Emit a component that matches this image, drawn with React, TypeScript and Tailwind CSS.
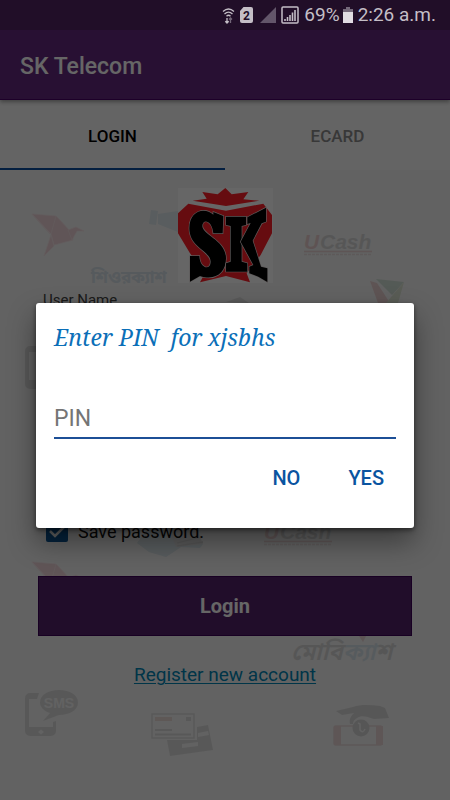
import React from 'react';

function StatusBar() {
  return (
    <div className="relative z-20 flex h-[30px] items-center justify-end bg-[#210e28] pr-[14px] text-[#c4bec6]">
      <svg width="15" height="20" viewBox="0 0 15 20" className="mr-1" fill="none" stroke="currentColor" strokeWidth="1.3">
        <path d="M2 6.500Q7.500 1.500 13 6.500M3.500 9Q7.500 5.200 11.500 9M5.500 11.200Q7.500 9.300 9.500 11.200" />
        <path d="M6 18V13M4.300 16.300 6 18l1.700-1.700" />
        <path d="M9.500 18v-5M8 14.500l1.500-1.500 1.500 1.500" opacity=".5" />
      </svg>
      <svg width="13" height="16" viewBox="0 0 13 16" className="mr-[7px]">
        <path d="M3.500 0H11a2 2 0 0 1 2 2v12a2 2 0 0 1-2 2H2a2 2 0 0 1-2-2V4z" fill="currentColor" />
        <text x="6.500" y="12.500" textAnchor="middle" fontSize="12" fontWeight="700" fontFamily="Roboto" fill="#210e28">2</text>
      </svg>
      <svg width="16" height="16" viewBox="0 0 16 16" className="mr-[5px]">
        <path d="M16 0v16H0z" fill="#63566a" />
      </svg>
      <svg width="18" height="18" viewBox="0 0 18 18" className="mr-[5px]">
        <rect x="1" y="1" width="16" height="16" rx="1" fill="none" stroke="currentColor" strokeWidth="1.500" />
        <path d="M4 15v-2M6.500 15v-4M9 15V9M11.500 15V6.500M14 15V4" stroke="currentColor" strokeWidth="1.600" />
      </svg>
      <span className="text-[19px] leading-6">69%</span>
      <svg width="10" height="16" viewBox="0 0 10 16" className="ml-[3px] mr-[5px]">
        <path d="M3 0h4v2h3v4H0V2h3z" fill="#74697a" />
        <path d="M0 5h10v11H0z" fill="#e0dce2" />
      </svg>
      <span className="text-[19px] leading-6">2:26 a.m.</span>
    </div>
  );
}

function Bird() {
  return (
    <g fill="#f0ccd3" stroke="#f5e2e5" strokeWidth=".7">
      <path d="M0 0 24 2 37 16 20 21z" />
      <path d="M24 2 37 16 41 26 22 31 19 20z" />
      <path d="M0 0 18 20 7 8z" />
      <path d="M36 16 44 13 52 17 45 17 40 26z" />
      <path d="M19 21 22 32 12 42z" />
    </g>
  );
}

function UCash() {
  return (
    <g fontFamily="Liberation Sans, Arial, sans-serif" fontWeight="700" fontStyle="italic">
      <text x="0" y="15" fontSize="21" fill="#ebc8c8">U</text>
      <text x="16" y="15" fontSize="21" fill="#d2d2d2">Cash</text>
      <path d="M0 17.500h68" stroke="#e8cccc" strokeWidth="1.500" />
      <path d="M0 20.500h68" stroke="#e8dada" strokeWidth="1.500" strokeDasharray="3 1" />
    </g>
  );
}

function Hand() {
  return (
    <g>
      <path d="M0 15 11 0 39 4 66 16 63 20 44 19 29 29 12 24z" fill="#d5e2e9" />
      <path d="M31 0 61 3 66 16 39 19z" fill="#dedede" />
      <path d="M40 15 64 9M40 18l26-4" stroke="#cecece" strokeWidth="1.500" />
    </g>
  );
}

function Phone() {
  return (
    <path fillRule="evenodd" d="M5 3h9l-2 6H4v28h24V32l3-1v10a5 5 0 0 1-5 5H5a5 5 0 0 1-5-5V8a5 5 0 0 1 5-5zM16 39.500l-3 2.500 3 2.500 3-2.500z" fill="#d8d8d8" />
  );
}

function SmsPhone() {
  return (
    <g>
      <Phone />
      <path d="M34 0c11 0 19 5 19 12.500S45 25 34 25l-16 6 7-8c-6-2-10-6-10-10.500C15 5 23 0 34 0z" fill="#d8d8d8" />
      <text x="34" y="17.500" textAnchor="middle" fontSize="14" fontWeight="700" fontFamily="Liberation Sans, Arial" fill="#f5f5f5">SMS</text>
    </g>
  );
}

function Watermarks() {
  return (
    <svg className="absolute left-0 top-0 opacity-80" width="450" height="630" viewBox="0 170 450 630" aria-hidden="true">
      <g transform="translate(32 214)"><Bird /></g>
      <g transform="translate(32 562)"><Bird /></g>
      <g transform="translate(304 234)"><UCash /></g>
      <g transform="translate(264 524)"><UCash /></g>
      <path d="M151 210l7 1-2 14-7-1zM158 214l20-3v21l-20-8z" fill="#d9e6ec" />
      <g transform="translate(137 528)"><Hand /></g>
      <text x="91" y="283" fontSize="17" fontWeight="700" fontFamily="Noto Sans Bengali, sans-serif" fill="#cfdce6">শিওরক্যাশ</text>
      <text x="291" y="660" fontSize="24" fontWeight="600" fontStyle="italic" fontFamily="Noto Sans Bengali, sans-serif" fill="#d0d0d0">
        মোবি<tspan fill="#d2e0e8">ক্যা</tspan>শ
      </text>
      <path d="M370 281l7 2 13 20h-12z" fill="#ebcaca" />
      <path d="M376 279l28 3-12 13z" fill="#cbdcd0" />
      <path d="M404 282l-6 21h-12z" fill="#d9e4cc" />
      <path d="M226 302l14-5 9 6z" fill="#dadada" />
      <g transform="translate(25 343)"><Phone /></g>
      <path d="M359 636h7l-3 6z" fill="#e8cccc" />
      <g transform="translate(25 690)"><SmsPhone /></g>
      <g fill="none" stroke="#d8d8d8" strokeWidth="1.500">
        <rect x="152" y="714" width="42" height="24" />
        <path d="M155 730h17M155 734.500h36" strokeWidth="2" />
      </g>
      <path d="M155 717h17v4h-17z" fill="#e8d6d2" />
      <path d="M186 717h5v4h-5z" fill="#d8d8d8" />
      <path fillRule="evenodd" d="M197 727l11-2 5 25-43 6-3-16h30zM182 744l16-2v4l-16 2zM198 733l10-2 1 4-11 2z" fill="#d8d8d8" />
      <rect x="334" y="726" width="48" height="19" rx="2" fill="none" stroke="#e8d2d2" strokeWidth="1.500" />
      <path d="M334 726h7v19h-7zM376 726h7v19h-7z" fill="#e8d2d2" />
      <path d="M336 711l17-4c8-3 18-2 27-1l5 2 4 10-15 1c-8-3-13-4-17-1q-4 2-4 6h-3c-1-5 1-8 4-11l-12 2z" fill="#d4d4d4" />
      <circle cx="361" cy="728" r="8.500" fill="#d0d0d0" />
      <path d="M358 723l2 1v6q3 4 5-1" fill="none" stroke="#f5f5f5" strokeWidth="1.500" />
    </svg>
  );
}

function Logo() {
  return (
    <svg className="relative mx-auto mt-[18px] block" width="95" height="95" viewBox="84 54 285 285" role="img" aria-label="SK">
      <path d="M84 54h285v285H84z" fill="#fff" />
      <g fill="#ff2028">
        <path d="M157 66l46 7 23-19 19 19 50-7-15 22 48 4-100 16-100-16 42-6z" />
        <path d="M115 101l113 21 112-21 26 34v55l-34 65-42 55 10 27-72-19-78 19 15-27-45-60-36-60v-60z" />
      </g>
      <g fill="#000" stroke="#e8e0e0" strokeWidth="4" paintOrder="stroke">
        <path d="M190 134v-8l30 12-2 52h-28C186 148 157 146 157 168c0 27 71 43 71 97 0 45-33 68-78 53l-30 17v-77h28c2 39 34 44 34 17 0-32-64-42-64-100 0-52 45-65 72-41z" />
        <path d="M228 140h60v25l-13 3v107l17 5v25h-64v-25l14-5V168l-14-3z" />
        <path d="M292 162v-20l56-29v42l-13 5-27 52 25 78 19 5v41l-27-16-27-10v-20l12-5-38-70 30-56z" />
      </g>
    </svg>
  );
}

function Dialog() {
  return (
    <div className="absolute inset-0 z-10 flex items-center bg-black/60 px-9 pt-[30px]">
      <form
        role="dialog"
        aria-labelledby="pin-title"
        className="w-full rounded-[3px] bg-white px-[18px] pb-[26px] pt-[18px] shadow-[0_14px_28px_rgba(0,0,0,0.4),0_2px_5px_rgba(0,0,0,0.5)]"
        onSubmit={(e) => e.preventDefault()}
      >
        <h2 id="pin-title" className="whitespace-pre font-['Noto_Serif','Droid_Serif','Liberation_Serif',serif] text-[23px] italic leading-8 text-[#0b6fb8]">
          Enter PIN  for xjsbhs
        </h2>
        <input
          type="password"
          aria-label="PIN"
          placeholder="PIN"
          className="mt-[46px] block h-10 w-full border-b-2 border-[#1c4f96] bg-transparent px-0 pt-[2px] text-[23px] text-black outline-none placeholder:text-[#757575]"
        />
        <div className="mt-[15px] flex justify-end">
          <button type="button" className="h-12 px-3 text-xl font-medium text-[#0a54a0]">NO</button>
          <button type="submit" className="ml-6 h-12 px-3 text-xl font-medium text-[#0a54a0]">YES</button>
        </div>
      </form>
    </div>
  );
}

export default function App() {
  return (
    <div className="relative flex min-h-screen flex-col bg-[#f5f5f5] font-[Roboto,sans-serif]">
      <StatusBar />
      <header className="relative z-[1] flex h-[70px] items-center border-b border-[#4a0066] bg-[#642a80] px-5 pt-1.5 shadow-[0_2px_4px_rgba(0,0,0,0.35)]">
        <h1 className="text-[23px] font-medium text-white">SK Telecom</h1>
      </header>
      <nav className="grid h-[70px] grid-cols-2 bg-[#fafafa] text-[17px] font-medium">
        <button className="border-b-2 border-[#0a4fa0] pt-1.5 text-black">LOGIN</button>
        <button className="border-b-2 border-transparent pt-1.5 text-[#8c8c8c]">ECARD</button>
      </nav>
      <main className="relative grow">
        <Watermarks />
        <Logo />
        <form className="relative px-[38px]" onSubmit={(e) => e.preventDefault()}>
          <label htmlFor="user" className="mt-[7px] block pl-[5px] text-[15px] leading-5 text-[#444]">User Name</label>
          <input id="user" type="text" className="mt-2 block h-12 w-full border-b border-[#777] px-[5px] text-xl" />
          <label htmlFor="password" className="mt-8 block pl-[5px] text-[15px] leading-5 text-[#444]">Password</label>
          <input id="password" type="password" className="mt-2 block h-12 w-full border-b border-[#777] px-[5px] text-xl" />
          <label className="mt-11 flex h-[26px] items-center gap-[10px] pl-2 text-[18px] text-[#111]">
            <span className="grid h-[22px] w-[22px]">
              <input type="checkbox" defaultChecked className="col-start-1 row-start-1 h-[22px] w-[22px] appearance-none rounded-[2px] bg-[#0a5596]" />
              <svg viewBox="0 0 22 22" className="pointer-events-none col-start-1 row-start-1">
                <path d="M4 11l5 5L19 6" fill="none" stroke="#f5f5f5" strokeWidth="2.500" />
              </svg>
            </span>
            Save password.
          </label>
          <button type="submit" className="mt-8 block h-[60px] w-full border border-[#3c0058] bg-[#54226a] text-xl font-bold text-white">Login</button>
          <div className="mt-[27px] text-center">
            <a href="#register" className="text-[19px] leading-6 text-[#0084b4] underline decoration-1 underline-offset-2">Register new account</a>
          </div>
        </form>
      </main>
      <Dialog />
    </div>
  );
}
